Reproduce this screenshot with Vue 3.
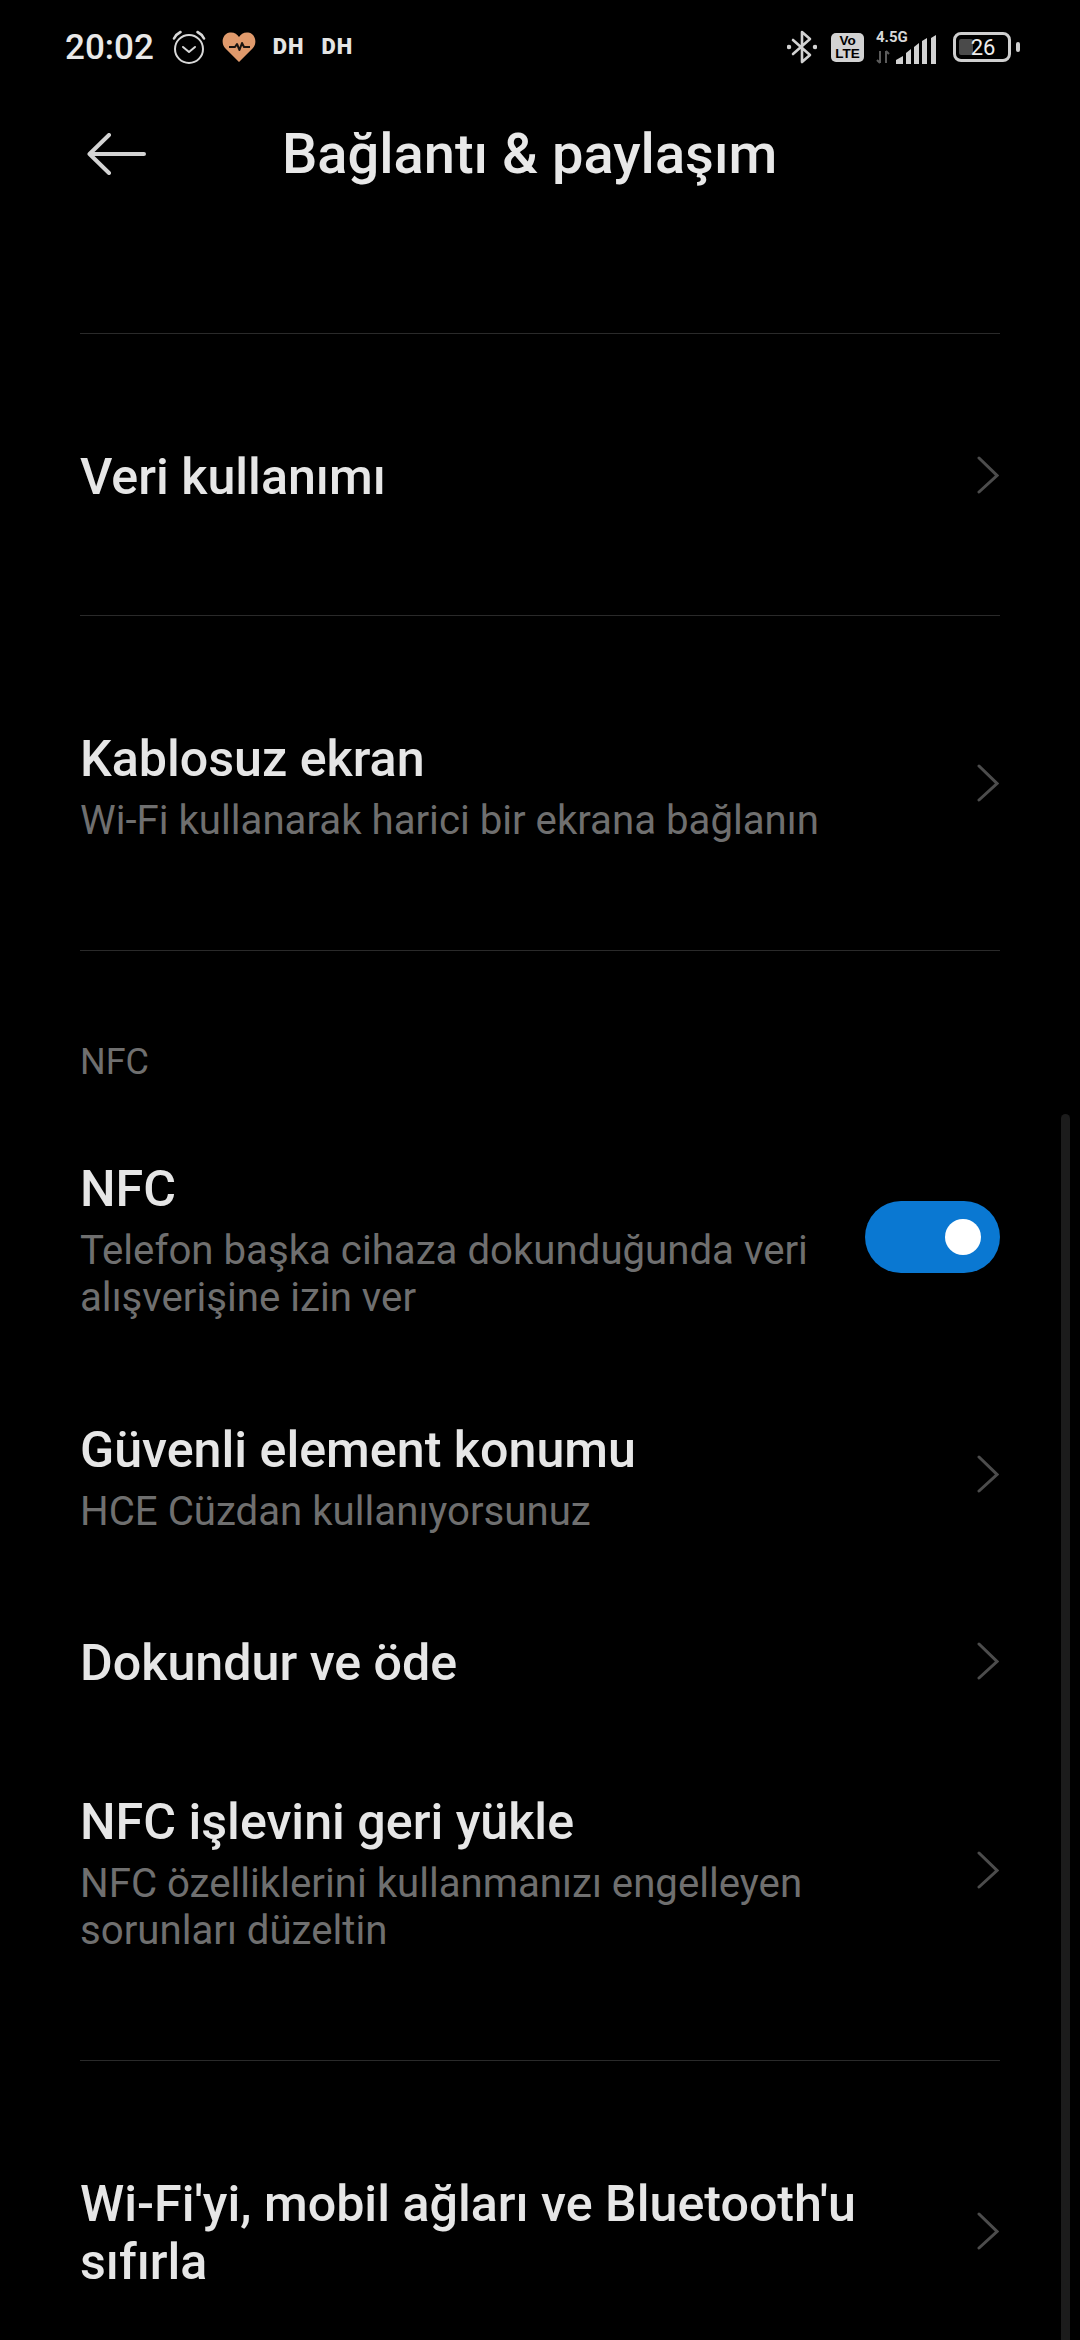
<script setup>
const groupA = [
  { key: 'secure', title: 'Güvenli element konumu', subs: ['HCE Cüzdan kullanıyorsunuz'], cls: 'r-secure' },
  { key: 'pay', title: 'Dokundur ve öde', subs: [], cls: 'r-pay' },
  { key: 'restore', title: 'NFC işlevini geri yükle', subs: ['NFC özelliklerini kullanmanızı engelleyen', 'sorunları düzeltin'], cls: 'r-restore' }
]
</script>

<template>
  <div class="screen">
    <div class="status">
      <div class="st-left">
        <span class="time">20:02</span>
        <svg class="alarm" width="36" height="36" viewBox="0 0 36 36" fill="none" stroke="#d8d8d8" stroke-width="2" stroke-linecap="round" stroke-linejoin="round">
          <circle cx="18" cy="20" r="14" />
          <path d="M12 18l6 5 6-5" />
          <path d="M3 9.500C4.500 6.500 6.500 4.500 9.500 3" stroke-width="2.600" />
          <path d="M33 9.500C31.500 6.500 29.500 4.500 26.500 3" stroke-width="2.600" />
        </svg>
        <svg class="heart" width="34" height="32" viewBox="0 0 34 32">
          <path d="M17 31L3 17C-1 12.500 0 4 6.500 1.800 11 .5 15 2.500 17 6 19 2.500 23 .5 27.500 1.800 34 4 35 12.500 31 17Z" fill="#e09a6c" />
          <path d="M7 16h6l2-3 2.500 6 2.500-7 2 4h6" fill="none" stroke="#1a1410" stroke-width="2" stroke-linejoin="round" />
        </svg>
        <span class="dh">DH</span>
        <span class="dh">DH</span>
      </div>
      <div class="st-right">
        <svg class="bt" width="30" height="34" viewBox="0 0 30 34" fill="none" stroke="#d2d2d2" stroke-width="2.600" stroke-linejoin="round" stroke-linecap="round">
          <path d="M6 10l17 15-8 7V2l8 7-17 15" />
          <path d="M2 17h0M28 17h0" stroke-width="4.500" />
        </svg>
        <div class="volte"><span>Vo</span><span>LTE</span></div>
        <div class="signal">
          <div class="net">
            <span class="g">4.5G</span>
            <svg width="14" height="14" viewBox="0 0 14 14" fill="none" stroke="#5c5c5c" stroke-width="2"><path d="M4 1v12M1 10l3 3M10 13V1M13 4l-3-3" /></svg>
          </div>
          <svg class="bars" width="40" height="29" viewBox="0 0 40 29" fill="#d2d2d2">
            <path d="M0 29v-4l7-4v8zM10 29V18l5-4v15zM18 29V12l5-4v21zM26 29V6l5-3v26zM35 29V3l5-3v29z" />
          </svg>
        </div>
        <div class="battery">
          <div class="cell"><i class="fill"></i><span class="pct">26</span></div>
          <i class="nub"></i>
        </div>
      </div>
    </div>

    <header class="head">
      <svg class="back" width="60" height="42" viewBox="0 0 60 42" fill="none" stroke="#d4d4d4" stroke-width="4" stroke-linecap="round" stroke-linejoin="round">
        <path d="M2.500 21H57M22 2L2.500 21 22 40" />
      </svg>
      <h1 class="page-title">Bağlantı &amp; paylaşım</h1>
    </header>

    <main class="list">
      <div class="row r-usage">
        <div class="txt"><div class="t">Veri kullanımı</div></div>
        <svg class="chev" width="22" height="38" viewBox="0 0 22 38" fill="none" stroke="#4c4c4c" stroke-width="3" stroke-linecap="round"><path d="M2 2l18 17.500L2 36" /></svg>
      </div>
      <div class="row r-cast">
        <div class="txt">
          <div class="t">Kablosuz ekran</div>
          <div class="s">Wi-Fi kullanarak harici bir ekrana bağlanın</div>
        </div>
        <svg class="chev" width="22" height="38" viewBox="0 0 22 38" fill="none" stroke="#4c4c4c" stroke-width="3" stroke-linecap="round"><path d="M2 2l18 17.500L2 36" /></svg>
      </div>
      <div class="section">
        <div class="label">NFC</div>
        <div class="row plain r-nfc">
          <div class="txt">
            <div class="t">NFC</div>
            <div class="s">Telefon başka cihaza dokunduğunda veri</div>
            <div class="s">alışverişine izin ver</div>
          </div>
          <div class="toggle"><i class="knob"></i></div>
        </div>
        <div v-for="r in groupA" :key="r.key" class="row plain" :class="r.cls">
          <div class="txt">
            <div class="t">{{ r.title }}</div>
            <div v-for="s in r.subs" :key="s" class="s">{{ s }}</div>
          </div>
          <svg class="chev" width="22" height="38" viewBox="0 0 22 38" fill="none" stroke="#4c4c4c" stroke-width="3" stroke-linecap="round"><path d="M2 2l18 17.500L2 36" /></svg>
        </div>
      </div>
      <div class="row r-reset">
        <div class="txt">
          <div class="t">Wi-Fi'yi, mobil ağları ve Bluetooth'u</div>
          <div class="t">sıfırla</div>
        </div>
        <svg class="chev" width="22" height="38" viewBox="0 0 22 38" fill="none" stroke="#4c4c4c" stroke-width="3" stroke-linecap="round"><path d="M2 2l18 17.500L2 36" /></svg>
      </div>
    </main>

    <i class="scrollbar"></i>
  </div>
</template>

<style>
html, body { margin: 0; background: #000; overflow: hidden; }
</style>

<style scoped>
.screen {
  position: relative;
  width: 1080px;
  height: 2340px;
  overflow: hidden;
  background: #000;
  color: #e6e6e6;
  font-family: Roboto, "Noto Sans", sans-serif;
}
.status {
  height: 94px;
  box-sizing: border-box;
  padding: 0 0 0 65px;
  display: flex;
  justify-content: space-between;
  align-items: center;
}
.st-left, .st-right { display: flex; align-items: center; }
.time { font-size: 35px; font-weight: 500; color: #e8e8e8; margin-right: 17px; }
.alarm { margin-right: 15px; }
.heart { margin-right: 17px; }
.dh { font: 900 22px/1 Roboto, sans-serif; letter-spacing: 1px; color: #e4e4e4; margin-right: 17px; }
.st-right { padding-right: 60px; }
.bt { margin-right: 14px; }
.volte {
  width: 33px; height: 29px; border-radius: 5px; background: #d2d2d2; color: #000;
  display: flex; flex-direction: column; align-items: center; justify-content: center;
  font: 700 13.500px/13px "Liberation Sans", sans-serif; margin-right: 12px;
}
.signal { display: flex; align-items: flex-end; }
.net { display: flex; flex-direction: column; align-items: flex-start; width: 20px; gap: 5px; }
.net .g { font: 700 15px/15px Roboto, sans-serif; color: #d8d8d8; white-space: nowrap; }
.bars { flex: none; }
.battery { display: flex; align-items: center; margin-left: 17px; }
.cell {
  position: relative; width: 58px; height: 30px; box-sizing: border-box;
  border: 3px solid #cfcfcf; border-radius: 8px;
  display: flex; align-items: center; justify-content: center;
}
.fill { position: absolute; left: 3px; top: 4px; height: 16px; width: 14px; background: #4a4a4a; border-radius: 2px; }
.pct { position: relative; font-size: 22px; color: #eee; padding-left: 2px; }
.nub { width: 4px; height: 10px; background: #cfcfcf; border-radius: 2px; margin-left: 5px; }

.head { height: 120px; box-sizing: border-box; padding-left: 87px; display: flex; align-items: center; }
.page-title { margin: 0 0 0 135px; font-size: 56px; font-weight: 500; color: #e8e8e8; white-space: nowrap; }

.list { margin: 0 80px; padding-top: 119px; }
.row { display: flex; align-items: center; justify-content: space-between; border-top: 1px solid #2a2a2a; box-sizing: border-box; }
.row.plain { border-top: 0; }
.txt { padding-top: 4px; }
.r-cast .txt, .r-nfc .txt, .r-secure .txt, .r-restore .txt { padding-top: 7px; }
.chev { flex: none; margin-right: 1px; }
.t { font-size: 50.200px; font-weight: 500; line-height: 58px; color: #e6e6e6; white-space: nowrap; }
.s { font-size: 40.200px; line-height: 47px; color: #6f6f6f; white-space: nowrap; }
.t + .s { margin-top: 9px; }
.r-usage { height: 282px; }
.r-cast { height: 335px; }
.section { border-top: 1px solid #2a2a2a; height: 1110px; box-sizing: border-box; }
.label { font-size: 36px; line-height: 40px; color: #6f6f6f; padding-top: 91px; }
.r-nfc { margin-top: 48px; height: 214px; }
.toggle { position: relative; width: 135px; height: 72px; border-radius: 36px; background: #0a78d2; flex: none; }
.knob { position: absolute; right: 19px; top: 18px; width: 36px; height: 36px; border-radius: 50%; background: #fff; }
.r-secure { height: 172px; margin-top: 44px; }
.r-pay { height: 100px; margin-top: 51px; }
.r-restore { height: 210px; margin-top: 54px; }
.r-reset { height: 340px; }
.scrollbar { position: absolute; left: 1061px; top: 1114px; width: 9px; bottom: 0; background: #1c1c1c; border-radius: 5px 5px 0 0; }
</style>
